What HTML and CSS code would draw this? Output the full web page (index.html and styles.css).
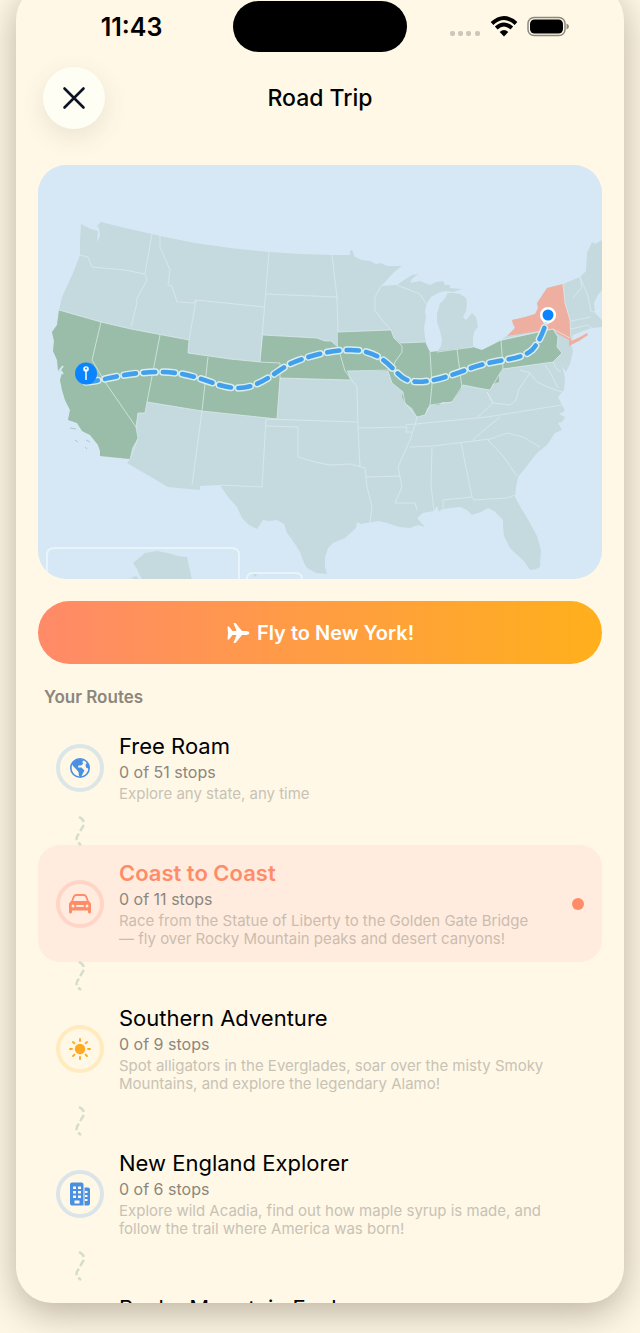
FILE: index.html
```html
<!DOCTYPE html>
<html lang="en">
<head>
    <meta charset="utf-8">
    <meta name="viewport" content="width=device-width">
    <title>Road Trip</title>
    <link rel="stylesheet" href="styles.css">
</head>
<body>
    <main class="phone">
        <!-- status bar -->
        <div class="status">
            <span class="time">11:43</span>
            <span class="island"></span>
            <span class="signals">
                <svg width="32" height="26" viewBox="0 0 32 26" fill="#cdc7b9">
                    <rect x="1" y="17" width="5" height="5" rx="2"/><rect x="9" y="17" width="5" height="5" rx="2"/><rect x="17" y="17" width="5" height="5" rx="2"/><rect x="26" y="17" width="5" height="5" rx="2"/>
                </svg>
                <svg width="28" height="26" viewBox="0 0 28 26" fill="none" stroke="#000" stroke-width="4">
                    <path d="M2 9.500Q14 -1.500 26 9.500"/>
                    <path d="M6.200 14Q14 7 21.800 14"/>
                    <path d="M14 22.500L9.700 18Q14 14.200 18.300 18Z" fill="#000" stroke="none"/>
                </svg>
                <svg width="42" height="26" viewBox="0 0 42 26">
                    <rect x="1" y="3.500" width="37" height="18" rx="6" fill="none" stroke="#8d887d" stroke-width="1.500"/>
                    <rect x="3" y="5.500" width="33" height="14" rx="4.500"/>
                    <path d="M39.500 9.500Q42 10.500 42 12.500T39.500 15.500Z" fill="#8d887d"/>
                </svg>
            </span>
        </div>

        <!-- header -->
        <header class="header">
            <button class="close" aria-label="Close">
                <svg width="24" height="24" viewBox="0 0 24 24" fill="none" stroke="#0c1424" stroke-width="2.600" stroke-linecap="round"><path d="M2.500 2.500L21.500 21.500M21.500 2.500L2.500 21.500"/></svg>
            </button>
            <h1>Road Trip</h1>
        </header>

        <!-- map -->
        <svg class="map" viewBox="38 165 564 414" role="img" aria-label="Route map">
            <path class="land" d="M81 224L91 229L98 231L97 242L100 236L99 228L97 226L101 222L125 228L152 234L160 236L195 243L230 248L269 252L300 254L332 255L350 255L350 251L352 250L355 257L362 260L370 261L376 264L381 263L387 266L402 266L393 273L386 281L381 286L397 285L404 280L412 275L418 274L412 279L410 283L420 281L430 285L436 282L443 281L445 285L450 285L450 288L462 289L453 292L445 291L438 293L431 297L427 303L425 311L426 317L424 328L425 337L427 348L430 352L437 352L441 346L442 340L440 331L437 322L437 314L440 303L443 301L448 293L454 293L460 294L466 298L467 303L466 311L463 317L466 320L472 313L476 317L478 327L474 332L473 338L473 347L478 350L482 350L491 346L500 340L507 336L515 328L513 324L512 320L525 317L535 314L538 308L537 303L547 288L563 284L580 277L586 271L587 253L592 242L595 244L602 240V290L598 295L594 303L595 313L602 320V327L592 328L583 331L573 335L571 344L573 351L570 364L566 372L562 366L565 378L564 390L558 397L562 405L565 411L559 414L565 417L562 422L558 423L562 430L555 433L547 445L537 453L530 462L518 477L516 487L515 497L521 508L530 523L537 536L541 550L540 567L536 569L530 570L524 561L515 553L510 548L504 536L503 527L503 520L500 517L494 511L488 508L481 512L472 515L467 510L460 507L442 509L439 512L437 506L434 511L423 513L417 518L425 527L418 525L410 528L400 527L393 525L387 523L379 521L372 522L361 524L357 522L356 528L345 538L333 543L328 548L325 557L325 567L327 574L316 573L307 568L304 563L300 552L293 541L287 533L284 524L277 520L269 521L263 520L257 529L249 525L242 518L237 507L228 497L220 485L200 486L200 490L168 487L127 463L130 459L100 456L100 451L98 445L90 435L82 431L77 423L68 420L70 410L65 400L62 390L60 380L62 373L58 370L57 360L53 351L54 341L52 332L57 325L59 310L62 297L73 273L80 255L80 240Z"/>
            <path class="land" d="M133 563L145 553L157 551L168 553L178 556L187 557L192 580L142 580L137 569ZM130 578L136 576L140 580ZM253 574L258 573L255 577Z"/>
            <path class="green" d="M59 310L101 322L131 329L189 340L188 353L230 359L260 362L263 335L317 338L325 341L331 341L338 347L338 332L391 330L394 338L400 343L425 342L430 352L473 347L482 350L500 341L553 329L558 337L557 347L562 353L553 362L503 369L499 375L499 382L493 384L490 390L478 388L463 385L460 391L452 402L442 402L439 405L430 405L427 409L425 415L417 417L412 408L405 403L402 397L403 392L392 383L388 371L347 371L350 380L280 378L277 419L202 411L147 402L145 413L138 413L136 427L138 438L132 448L130 459L100 456L100 451L98 445L90 435L82 431L77 423L68 420L70 410L65 400L62 390L60 380L62 373L58 370L57 360L53 351L54 341L52 332L57 325Z"/>
            <path class="coral" d="M507 336L515 328L513 324L512 320L525 317L535 314L538 308L537 303L547 288L563 284L565 303L570 320L571 341L580 337L587 333L588 335L579 341L569 346L569 340L558 334L553 329Z"/>
            <g class="borders">
                <path d="M80 255L88 257L92 267L125 270L145 274M152 234L145 274L147 280L136 300L137 303L131 327M160 236L160 247L170 270L168 285L172 286L177 302L194 303L196 300L264 307M196 300L189 340L188 353L230 359L260 362M269 252L260 362L280 363L280 378M266 294L337 297M332 255L337 297L338 332L391 330M263 335L317 338L325 341L331 341L338 347L345 371L357 387L358 428L360 467M381 286L375 297L375 310L382 320L391 330L394 338L402 346L402 352L395 362L392 370L347 371"/>
                <path d="M397 285L420 294L427 305M400 343L425 342M59 310L101 322L131 329L189 340M101 322L92 360L105 382L136 427M160 335L147 402L145 413L138 413L136 427L138 438L130 459M208 357L202 411L192 485M147 402L202 411L277 419L280 378L350 380M266 419L262 487L220 485M266 419L357 422M266 426L298 427L298 457L315 462L330 465L350 464L365 468L367 487L372 507L370 522M359 428L407 427L406 432L412 432M366 477L400 476M417 417L415 425L410 440L398 467L402 487L395 503L415 503L417 510"/>
                <path d="M388 371L392 383L403 392L405 403L417 417L425 415L430 405L452 402L463 385L478 388L490 390L500 373L503 369L553 362M430 352L432 385L430 405M457 349L462 388M473 347L437 352M501 340L503 369M500 340L553 329L558 337L557 347L562 353L553 362L558 371L561 371"/>
                <path d="M405 425L487 417L562 405M410 447L432 446L490 439L507 433L523 437L540 447M432 447L431 485L434 511M461 443L472 497L443 500L443 508M472 497L474 500L507 498L515 495M488 440L503 456L517 476M473 440L484 430L500 417M478 417L493 403L487 392M487 392L493 403L510 405L516 400L519 389L530 373L520 370M530 373L537 382L550 388L562 392M545 365L551 374L558 388M563 284L565 303L570 320L571 338M571 321L591 317M571 329L588 325L593 329M580 277L582 287L573 298M580 277L588 296L591 312L600 311M553 329L570 338"/>
            </g>
            <path class="inset" d="M47 579V555Q47 548 54 548H232Q239 548 239 555V579M247 579Q247 573 253 573H295Q302 573 302 579"/>
            <g class="lakes"><path d="M63 366L60 370L63 374"/></g>
            <path d="M70 428l6 1M75 440l3 2M86 440l4 2M85 447l2 2" stroke="#adc8cf"/>
            <path class="casing" d="M86 382C99 382 123 372 160 372S215 388 238 388S278 369 292 363S329 350 350 350C385 350 393 373 405 379C420 387 450 376 471 368C500 358 519 361 532 350C540 342 546 325 548 315"/>
            <path class="route" d="M86 382C99 382 123 372 160 372S215 388 238 388S278 369 292 363S329 350 350 350C385 350 393 373 405 379C420 387 450 376 471 368C500 358 519 361 532 350C540 342 546 325 548 315"/>
            <circle cx="86" cy="373.500" r="11" fill="#0a84ff"/>
            <path d="M86 370V380" stroke="#fff" stroke-width="1.500"/>
            <circle cx="86" cy="369" r="2.800" fill="#fff"/><circle cx="86" cy="368.500" r=".9" fill="#0a84ff"/>
            <circle cx="548" cy="315" r="6.800" fill="#0a84ff" stroke="#fff" stroke-width="2.600"/>
        </svg>

        <button class="fly">
            <svg width="24" height="22" viewBox="0 0 24 22" fill="#fff"><path d="M1.500 4.500H3L6.500 9H10.500L7.500 1H9.500L16 9H20.500Q23.500 9.500 23.500 11T20.500 13H16L9.500 21H7.500L10.500 13H6.500L3 17.500H1.500L2 11Z"/></svg>
            Fly to New York!
        </button>

        <!-- routes -->
        <h2>Your Routes</h2>
        <ul class="routes">
            <li>
                <button class="row">
                    <span class="badge sky">
                        <svg width="20" height="20" viewBox="0 0 20 20"><circle cx="10" cy="10" r="9.200" fill="none" stroke="#4a90e2" stroke-width="1.600"/><path d="M2 6Q5 1 10.500 1L14 2.500L12 4L13.500 5.500L11 7.500L8.500 7.500L8 9.500L11.500 9.500L14.500 12.500L13 15L11 19.500L9 18L8.500 14L6 11L3 8ZM17 4.500L19 8L19 11L16 9.500L15.500 7Z" fill="#4a90e2"/></svg>
                    </span>
                    <span class="info">
                        <span class="name">Free Roam</span>
                        <span class="stops">0 of 51 stops</span>
                        <span class="desc">Explore any state, any time</span>
                    </span>
                </button>
                <svg class="trail" width="14" height="30" viewBox="0 0 14 30"><path d="M6 1Q14 5 9 12L5 19Q1 24 8 29"/></svg>
            </li>
            <li>
                <button class="row selected">
                    <span class="badge red">
                        <svg width="24" height="20" viewBox="0 0 24 20"><path d="M4 7.500L5.800 2.600Q6.500 1 8.500 1H15.500Q17.500 1 18.200 2.600L20 7.500" fill="none" stroke="#ff8c69" stroke-width="1.800"/><path d="M3 7H21L23 9.500V18Q23 19.500 21.500 19.500T20 18V16.500H4V18Q4 19.500 2.500 19.500T1 18V9.500Z" fill="#ff8c69"/><g fill="#ffecdf"><circle cx="5" cy="12" r="1.500"/><circle cx="19" cy="12" r="1.500"/><rect x="8" y="11" width="8" height="2" rx="1"/></g></svg>
                    </span>
                    <span class="info">
                        <span class="name">Coast to Coast</span>
                        <span class="stops">0 of 11 stops</span>
                        <span class="desc">Race from the Statue of Liberty to the Golden Gate Bridge — fly over Rocky Mountain peaks and desert canyons!</span>
                    </span>
                    <span class="dot"></span>
                </button>
                <svg class="trail" width="14" height="30" viewBox="0 0 14 30"><path d="M6 1Q14 5 9 12L5 19Q1 24 8 29"/></svg>
            </li>
            <li>
                <button class="row">
                    <span class="badge sun">
                        <svg width="22" height="22" viewBox="0 0 22 22"><circle cx="11" cy="11" r="5.200" fill="#ffaa20"/><path d="M11 1V3M11 19V21M1 11H3M19 11H21M4 4L5.400 5.400M16.600 16.600L18 18M4 18L5.400 16.600M16.600 5.400L18 4" stroke="#ffaa20" stroke-width="1.900" stroke-linecap="round"/></svg>
                    </span>
                    <span class="info">
                        <span class="name">Southern Adventure</span>
                        <span class="stops">0 of 9 stops</span>
                        <span class="desc">Spot alligators in the Everglades, soar over the misty Smoky Mountains, and explore the legendary Alamo!</span>
                    </span>
                </button>
                <svg class="trail" width="14" height="30" viewBox="0 0 14 30"><path d="M6 1Q14 5 9 12L5 19Q1 24 8 29"/></svg>
            </li>
            <li>
                <button class="row">
                    <span class="badge blue">
                        <svg width="20" height="24" viewBox="0 0 20 24"><path d="M0 2.500Q0 .5 2 .5H11.500Q13.500 .5 13.500 2.500V23.500H2Q0 23.500 0 21.500ZM14.500 5.500H18Q20 5.500 20 7.500V21.500Q20 23.500 18 23.500H14.500Z" fill="#4a90e2"/><path d="M3 4.500h3v2.500h-3zM8 4.500h3v2.500h-3zM3 9h3v2.500h-3zM8 9h3v2.500h-3zM3 13.500h3v2.500h-3zM8 13.500h3v2.500h-3zM4.500 18.500h5v3h-5zM15 9h2.500v2h-2.500zM15 13h2.500v2h-2.500zM15 17h2.500v2h-2.500z" fill="#fff8e7"/></svg>
                    </span>
                    <span class="info">
                        <span class="name">New England Explorer</span>
                        <span class="stops">0 of 6 stops</span>
                        <span class="desc">Explore wild Acadia, find out how maple syrup is made, and follow the trail where America was born!</span>
                    </span>
                </button>
                <svg class="trail" width="14" height="30" viewBox="0 0 14 30"><path d="M6 1Q14 5 9 12L5 19Q1 24 8 29"/></svg>
            </li>
            <li>
                <button class="row brief">
                    <span class="badge sky"></span>
                    <span class="info">
                        <span class="name">Rocky Mountain Explorer</span>
                    </span>
                </button>
            </li>
        </ul>
    </main>
</body>
</html>
```
FILE: styles.css
```css
* {margin: 0; padding: 0; box-sizing: border-box;}
body {font-family: Inter, "Liberation Sans", sans-serif; background: #fef7e6; height: 100vh; overflow: hidden; display: flex; flex-direction: column; padding: 0 16px 30px;}
button {border: 0; background: none; font: inherit; color: inherit; cursor: pointer;}
svg {display: block; flex: none;}

.phone {flex: 1; min-height: 0; overflow: hidden; margin-top: -16px; padding: 16px 22px 0; background: #fff8e7; border-radius: 36px; box-shadow: 0 10px 36px rgba(70, 55, 35, 0.36);}

/* status bar */
.status {display: grid; grid-template-columns: 1fr 174px 1fr; align-items: center; height: 53px; margin: 0 -8px;}
.time {text-align: center; font-size: 25px; font-weight: 600;}
.island {height: 51px; border-radius: 26px; background: #000;}
.signals {display: flex; justify-content: center; gap: 9px;}

/* header */
.header {display: grid; grid-template-columns: 62px 1fr 62px; align-items: center; height: 90px; padding: 0 5px;}
.header h1 {text-align: center; font-size: 23px; font-weight: 500;}
.close {width: 62px; height: 62px; border-radius: 50%; background: #fffef4; display: flex; align-items: center; justify-content: center; box-shadow: 0 8px 24px rgba(90, 80, 50, 0.12);}

/* map */
.map {width: 100%; height: auto; margin-top: 22px; border-radius: 28px; background: #d6e8f5;}
.land {fill: #c5dadf;}
.green {fill: #9abda9;}
.coral {fill: #efafa0;}
.borders {fill: none; stroke: #dcebed; stroke-opacity: 0.75; stroke-width: 1; stroke-linejoin: round;}
.lakes {fill: none; stroke: #d6e8f5; stroke-width: 2;}
.inset {fill: none; stroke: #e9f3fa; stroke-width: 2;}
.casing, .route {fill: none; stroke-linecap: round; stroke-dasharray: 12 7.400;}
.casing {stroke: #d9eef0; stroke-width: 7.500;}
.route {stroke: #419fec; stroke-width: 4.600;}

.fly {display: flex; align-items: center; justify-content: center; gap: 7px; width: 100%; height: 63px; margin-top: 22px; border-radius: 32px; background: linear-gradient(90deg, #ff8a69, #ffb01c); color: #fff; font-size: 20px; font-weight: 600;}

/* routes */
h2 {margin: 21px 0 9px; padding-left: 6px; font-size: 17px; line-height: 24px; font-weight: 600; color: #8b877c;}
.routes {list-style: none;}
.row {display: flex; align-items: center; gap: 15px; width: 100%; padding: 14px 18px; border-radius: 22px; text-align: left;}
.info {flex: 1; padding-right: 36px;}
.info span {display: block;}
.name {font-size: 22px; line-height: 28px; color: #000;}
.stops {font-size: 16px; line-height: 25px; color: #8b877c;}
.desc {font-size: 15px; line-height: 18px; color: #c8c2b4;}
.badge {flex: none; width: 48px; height: 48px; border: 4px solid; border-radius: 50%; display: flex; align-items: center; justify-content: center;}
.sky {border-color: #dce6e6;}
.red {border-color: #ffd5c7;}
.sun {border-color: #ffebbd;}
.blue {border-color: #dbe4e8;}
.selected {background: #ffecdf;}
.selected .info {padding-right: 16px;}
.selected .name {color: #ff8c69; font-weight: 600;}
.selected .desc {color: #cbbcae;}
.brief {min-height: 117px;}
.brief .info {align-self: flex-start;}
.dot {width: 12px; height: 12px; border-radius: 50%; background: #ff8c69;}
.trail {margin: -1px 0 -1px 35px; fill: none; stroke: #d5ddcb; stroke-width: 2.5px; stroke-dasharray: 7 3;}
```
